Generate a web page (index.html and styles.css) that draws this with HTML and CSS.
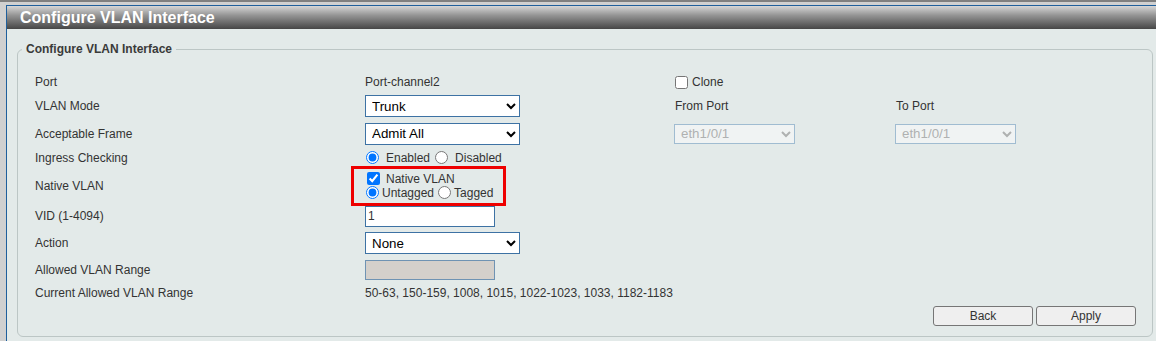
FILE: index.html
```html
<!DOCTYPE html>
<html>

<head>
    <meta charset="UTF-8">
    <title>Configure VLAN Interface</title>
    <link rel="stylesheet" href="styles.css">
</head>

<body>
    <div class="topbar"></div>
    <div class="main">
        <div class="header">Configure VLAN Interface</div>
        <fieldset class="box">
            <legend>Configure VLAN Interface</legend>
            <div class="form">
                <!-- Port -->
                <div class="label">Port</div>
                <div class="value">Port-channel2</div>
                <div class="check"><input type="checkbox" id="clone"><label for="clone">Clone</label></div>
                <div></div>

                <!-- VLAN Mode -->
                <div class="label">VLAN Mode</div>
                <div class="value">
                    <select class="sel wide">
                        <option>Trunk</option>
                    </select>
                </div>
                <div class="label">From Port</div>
                <div class="label">To Port</div>

                <!-- Acceptable Frame -->
                <div class="label">Acceptable Frame</div>
                <div class="value">
                    <select class="sel wide">
                        <option>Admit All</option>
                    </select>
                </div>
                <div class="value">
                    <select class="sel port" disabled>
                        <option>eth1/0/1</option>
                    </select>
                </div>
                <div class="value">
                    <select class="sel port" disabled>
                        <option>eth1/0/1</option>
                    </select>
                </div>

                <!-- Ingress Checking -->
                <div class="label">Ingress Checking</div>
                <div class="value radios">
                    <input type="radio" name="ingress" id="ing_en" checked><label for="ing_en">Enabled</label>
                    <input type="radio" name="ingress" id="ing_dis"><label for="ing_dis">Disabled</label>
                </div>
                <div></div>
                <div></div>

                <!-- Native VLAN -->
                <div class="label">Native VLAN</div>
                <div class="value">
                    <div class="highlight">
                        <div class="line native">
                            <input type="checkbox" id="native" checked><label for="native">Native VLAN</label>
                        </div>
                        <div class="line tight">
                            <input type="radio" name="tag" id="untagged" checked><label for="untagged">Untagged</label>
                            <input type="radio" name="tag" id="tagged"><label for="tagged">Tagged</label>
                        </div>
                    </div>
                </div>
                <div></div>
                <div></div>

                <!-- VID -->
                <div class="label">VID (1-4094)</div>
                <div class="value"><input type="text" class="txt" value="1"></div>
                <div></div>
                <div></div>

                <!-- Action -->
                <div class="label">Action</div>
                <div class="value">
                    <select class="sel wide">
                        <option>None</option>
                    </select>
                </div>
                <div></div>
                <div></div>

                <!-- Allowed VLAN Range -->
                <div class="label">Allowed VLAN Range</div>
                <div class="value"><input type="text" class="txt" disabled></div>
                <div></div>
                <div></div>

                <!-- Current Allowed VLAN Range -->
                <div class="label">Current Allowed VLAN Range</div>
                <div class="value">50-63, 150-159, 1008, 1015, 1022-1023, 1033, 1182-1183</div>
                <div></div>
                <div></div>
            </div>
            <div class="buttons">
                <button type="button">Back</button>
                <button type="button">Apply</button>
            </div>
        </fieldset>
    </div>
</body>

</html>
```

FILE: styles.css
```css
body {
    margin: 0;
    background-color: #d0d0d0;
    font-family: "Liberation Sans", Arial, sans-serif;
    font-size: 12px;
    color: #333333;
    height: 341px;
    overflow: hidden;
}

.topbar {
    height: 2px;
    background-color: #7f7f7f;
}

.main {
    margin-top: 3px;
    margin-left: 6px;
    border-top: 1px solid #1f5f9c;
    border-left: 1px solid #1f5f9c;
    background-color: #e3eae9;
    height: 340px;
}

.header {
    height: 23px;
    line-height: 23px;
    padding-left: 13px;
    color: #FFFFFF;
    font-size: 16px;
    font-weight: bold;
    background: linear-gradient(#d6d6d6, #959595 40%, #464646);
}

.box {
    margin: 13px 3px 0 10px;
    padding: 15px 0 10px 0;
    border: 1px solid #bcc6c5;
    border-radius: 6px;
    min-width: 0;
}

.box legend {
    margin-left: 4px;
    padding: 0 4px;
    font-weight: bold;
    line-height: 14px;
    color: #3a3a3a;
}

.form {
    display: grid;
    grid-template-columns: 331px 309px 221px 1fr;
    grid-template-rows: 22px 26px 29px 19px 37px 24px 30px 23px 23px;
    align-items: center;
    padding-left: 17px;
}

.check,
.radios,
.line {
    display: flex;
    align-items: center;
}

.check input {
    margin: 0 4px 0 0;
    width: 13px;
    height: 13px;
}

.value {
    margin-left: -1px;
}

.radios input {
    margin: 0 7px 0 1px;
    width: 13px;
    height: 13px;
}

.radios label {
    margin-right: 4px;
}

.sel {
    font-family: "Liberation Sans", Arial, sans-serif;
    font-size: 13.33px;
    color: #000000;
    background-color: #FFFFFF;
    border: 1px solid #3d72a4;
    border-radius: 0;
    height: 22px;
    padding: 0 2px;
    margin: 0;
}

.wide {
    width: 155px;
}

.port {
    width: 121px;
    height: 20px;
    color: #9a9a9a;
    background-color: #f6f8f8;
    border-color: #85a9c8;
}

.highlight {
    margin-left: -14px;
    width: 137px;
    height: 31px;
    border: 3px solid #ee0000;
    padding: 3px 0 0 12px;
}

.line {
    height: 14px;
}

.native input {
    margin: 0 6px 0 1px;
    width: 13px;
    height: 13px;
}

.tight input {
    margin: 0 3px 0 0;
    width: 13px;
    height: 13px;
}

.tight label {
    margin-right: 4px;
}

.txt {
    font-family: "Liberation Sans", Arial, sans-serif;
    font-size: 12px;
    color: #333333;
    width: 130px;
    height: 21px;
    box-sizing: border-box;
    border: 1px solid #3d72a4;
    padding: 1px 2px;
    margin: 0;
}

.txt:disabled {
    background-color: #d4d0cb;
    border-color: #6f93b3;
    height: 20px;
}

.buttons {
    display: flex;
    justify-content: flex-end;
    gap: 3px;
    margin-top: 2px;
    padding-right: 16px;
}

button {
    width: 100px;
    height: 20px;
    font-family: "Liberation Sans", Arial, sans-serif;
    font-size: 12px;
    color: #333333;
    background-color: #efefef;
    border: 1px solid #767676;
    border-radius: 3px;
    padding: 0;
}
```
